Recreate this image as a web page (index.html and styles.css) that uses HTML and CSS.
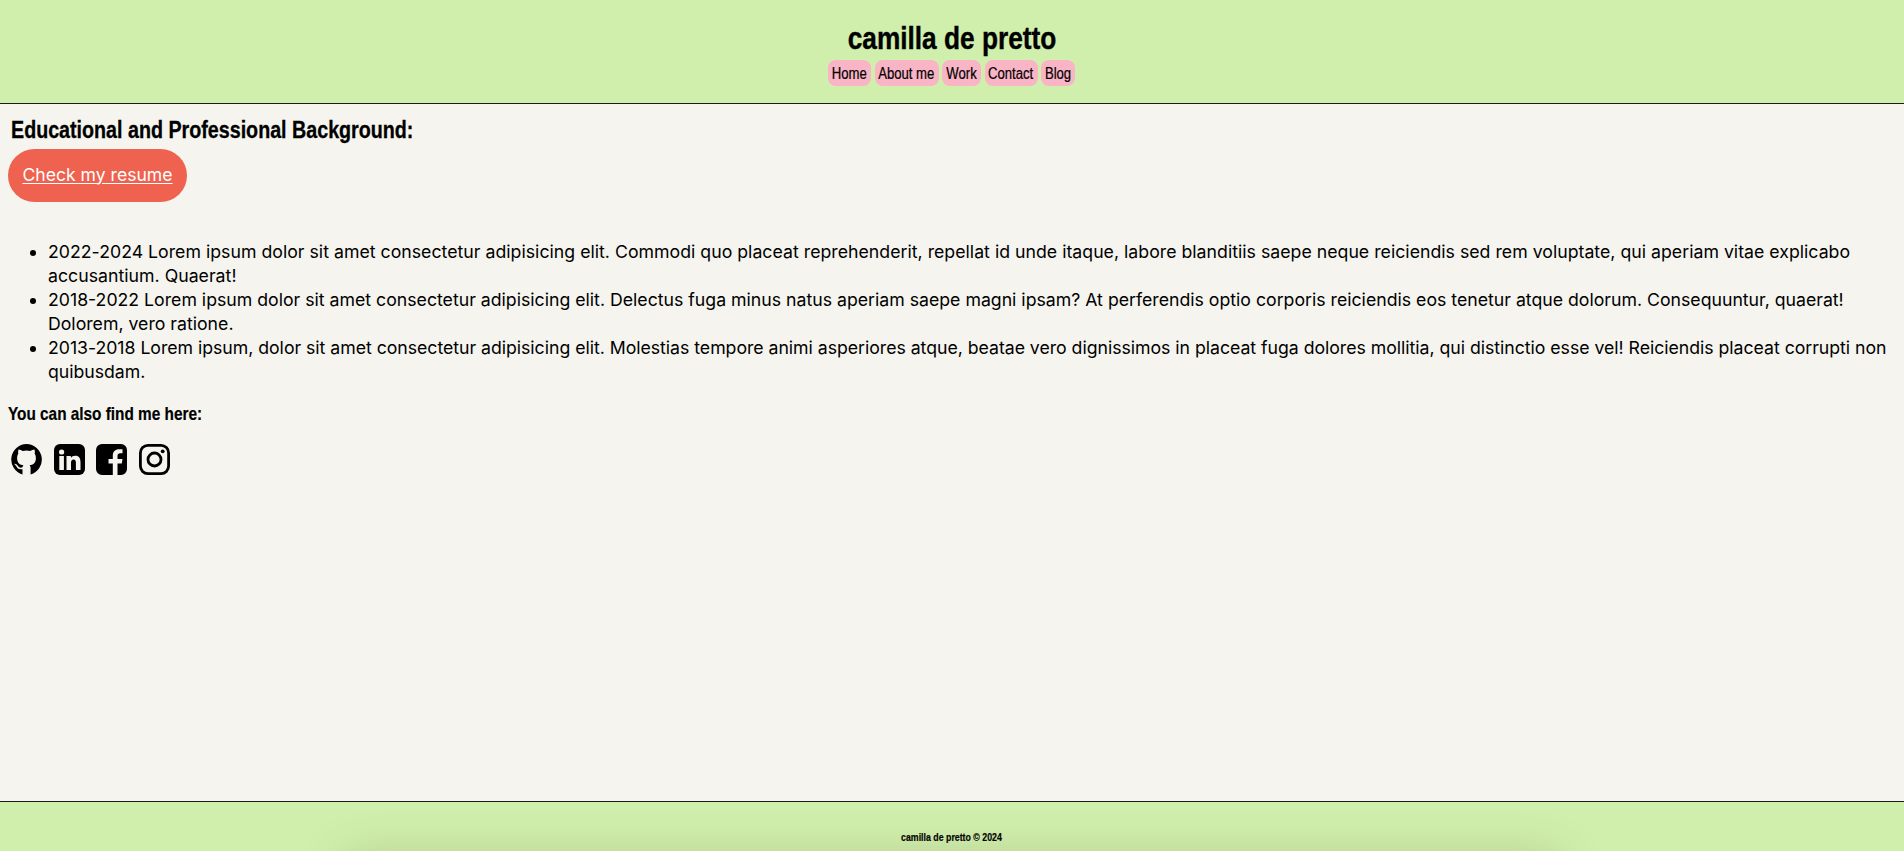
FILE: index.html
```html
<!DOCTYPE html>
<html lang="en">
<head>
<meta charset="utf-8">
<title>camilla de pretto</title>
<link rel="stylesheet" href="styles.css">
</head>
<body>
<header class="site-header">
  <h1 class="site-title narrow">camilla de pretto</h1>
  <nav class="nav">
    <a class="nav-link home"><span class="narrow">Home</span></a>
    <a class="nav-link about"><span class="narrow">About me</span></a>
    <a class="nav-link work"><span class="narrow">Work</span></a>
    <a class="nav-link contact"><span class="narrow">Contact</span></a>
    <a class="nav-link blog"><span class="narrow">Blog</span></a>
  </nav>
</header>
<main class="content">
  <h2 class="section-title narrow">Educational and Professional Background:</h2>
  <a class="resume">Check my resume</a>
  <ul class="history">
    <li class="loose">2022-2024 Lorem ipsum dolor sit amet consectetur adipisicing elit. Commodi quo placeat reprehenderit, repellat id unde itaque, labore blanditiis saepe neque reiciendis sed rem voluptate, qui aperiam vitae explicabo accusantium. Quaerat!</li>
    <li>2018-2022 Lorem ipsum dolor sit amet consectetur adipisicing elit. Delectus fuga minus natus aperiam saepe magni ipsam? At perferendis optio corporis reiciendis eos tenetur atque dolorum. Consequuntur, quaerat! Dolorem, vero ratione.</li>
    <li class="tight">2013-2018 Lorem ipsum, dolor sit amet consectetur adipisicing elit. Molestias tempore animi asperiores atque, beatae vero dignissimos in placeat fuga dolores mollitia, qui distinctio esse vel! Reiciendis placeat corrupti non quibusdam.</li>
  </ul>
  <h3 class="social-title narrow">You can also find me here:</h3>
  <div class="social">
    <svg class="icon" viewBox="0 0 31 31"><path d="M15.5 0A15.5 15.5 0 0 0 11.5 30.4v-5.2c-4.3.8-5.5-1.7-6.4-3.3-.4-.8-1.2-1.5-1.8-2 1.5-.3 2.6.7 3.5 1.9 1.2 1.8 2.6 2.2 4.7 1.5.1-1 .5-1.7 1-2.1-3.5-.4-6.4-2.2-6.4-7.3 0-1.7.4-3.1 1.2-4.2-.3-1.3-.3-3 .3-4.3 1.5 0 2.900.8 4.100 1.700a15 15 0 0 1 7.600 0c1.200-.9 2.600-1.700 4.100-1.700.6 1.300.6 3 .3 4.300.8 1.100 1.200 2.500 1.200 4.200 0 5.100-2.900 6.900-6.400 7.300.6.5 1.100 1.400 1.100 2.900v6.300A15.5 15.5 0 0 0 15.5 0Z"/></svg>
    <svg class="icon" viewBox="0 0 31 31"><rect width="31" height="31" rx="6"/><g fill="#f5f4ee"><circle cx="7.6" cy="8" r="2.6"/><path d="M5.3 12h4.6v14H5.3zM12.5 12h4.4v1.9c.8-1.3 2.3-2.2 4.3-2.2 4 0 5.3 2.5 5.3 6.4V26h-4.6v-7.1c0-2-.5-3.4-2.3-3.4-1.900 0-2.600 1.400-2.600 3.400V26h-4.5z"/></g></svg>
    <svg class="icon" viewBox="0 0 31 31"><path d="M6 0h19a6 6 0 0 1 6 6v19a6 6 0 0 1-6 6h-3.5V19.5h4.3l.7-4.5h-5v-3c0-1.8.8-2.7 2.8-2.7h2.2V5.2h-3.2c-4.2 0-6.5 2.4-6.5 6.4V15h-4.3v4.5h4.3V31H6a6 6 0 0 1-6-6V6a6 6 0 0 1 6-6Z"/></svg>
    <svg class="icon" viewBox="0 0 31 31"><rect x="1.4" y="1.4" width="28.2" height="28.2" rx="7.5" fill="none" stroke="#000" stroke-width="2.8"/><circle cx="15.5" cy="15.5" r="6.5" fill="none" stroke="#000" stroke-width="2.8"/><circle cx="23.7" cy="7.3" r="1.9"/></svg>
  </div>
</main>
<footer class="site-footer"><span class="narrow">camilla de pretto © 2024</span></footer>
</body>
</html>
```

FILE: styles.css
```css
* { box-sizing: border-box; }
body {
  margin: 0;
  height: 851px;
  display: flex;
  flex-direction: column;
  overflow: hidden;
  background: #f5f4ee;
  color: #000;
  font-family: Inter, "Open Sans", sans-serif;
  font-size: 17.7px;
  line-height: 24px;
}
h1, h2, h3 { margin: 0; white-space: nowrap; }
.narrow {
  font-family: "Liberation Sans", Arial, sans-serif;
  transform: scaleX(0.82);
  white-space: nowrap;
  -webkit-text-stroke: 0.2px #000;
}
.site-header {
  height: 104px;
  padding-top: 20px;
  background: #d0efac;
  border-bottom: 1px solid #1c1c1c;
  text-align: center;
}
.site-title { font-size: 32px; line-height: 37px; -webkit-text-stroke-width: 0.4px; }
.nav {
  display: flex;
  justify-content: center;
  gap: 3.5px;
  margin-top: 3px;
  padding-right: 1px;
}
.nav-link {
  display: flex;
  justify-content: center;
  height: 26px;
  border-radius: 8px;
  background: #f9b4c5;
  font-size: 16px;
  line-height: 27px;
}
.home { width: 43px; }
.about { width: 64px; }
.work { width: 39px; }
.contact { width: 53px; }
.blog { width: 34px; }
.content { flex: 1; padding: 12px 8px 0; }
.section-title {
  margin-left: 3px;
  font-size: 24px;
  line-height: 28px;
  transform-origin: left;
  -webkit-text-stroke-width: 0.3px;
}
.resume {
  display: flex;
  align-items: center;
  justify-content: center;
  width: 179px;
  height: 53px;
  margin-top: 5px;
  padding-bottom: 2px;
  border-radius: 27px;
  background: #ef624f;
  color: #fff;
  font-size: 17.6px;
  text-decoration: underline;
  text-decoration-thickness: 1px;
  text-underline-offset: 2px;
}
.history { margin: 38px 0 0; padding-left: 40px; }
.history .loose { letter-spacing: 0.018px; }
.history .tight { letter-spacing: -0.028px; }
.social-title {
  margin-top: 19px;
  font-size: 18.72px;
  line-height: 22px;
  transform-origin: left;
}
.social { display: flex; gap: 11.5px; margin: 18.5px 0 0 3px; }
.icon { width: 31px; height: 31px; }
.site-footer {
  position: relative;
  display: flex;
  justify-content: center;
  height: 50px;
  padding: 28px 2px 0 0;
  background: #d0efac;
  border-top: 1px solid #1c1c1c;
  font-size: 10.72px;
  font-weight: bold;
  line-height: 14px;
  overflow: hidden;
}
/* Soft shade rising from the bottom edge */
.site-footer::after {
  content: "";
  position: absolute;
  left: 350px;
  right: 350px;
  top: 60px;
  height: 40px;
  box-shadow: 0 0 46px 4px rgba(100, 90, 70, 0.26);
}
```
